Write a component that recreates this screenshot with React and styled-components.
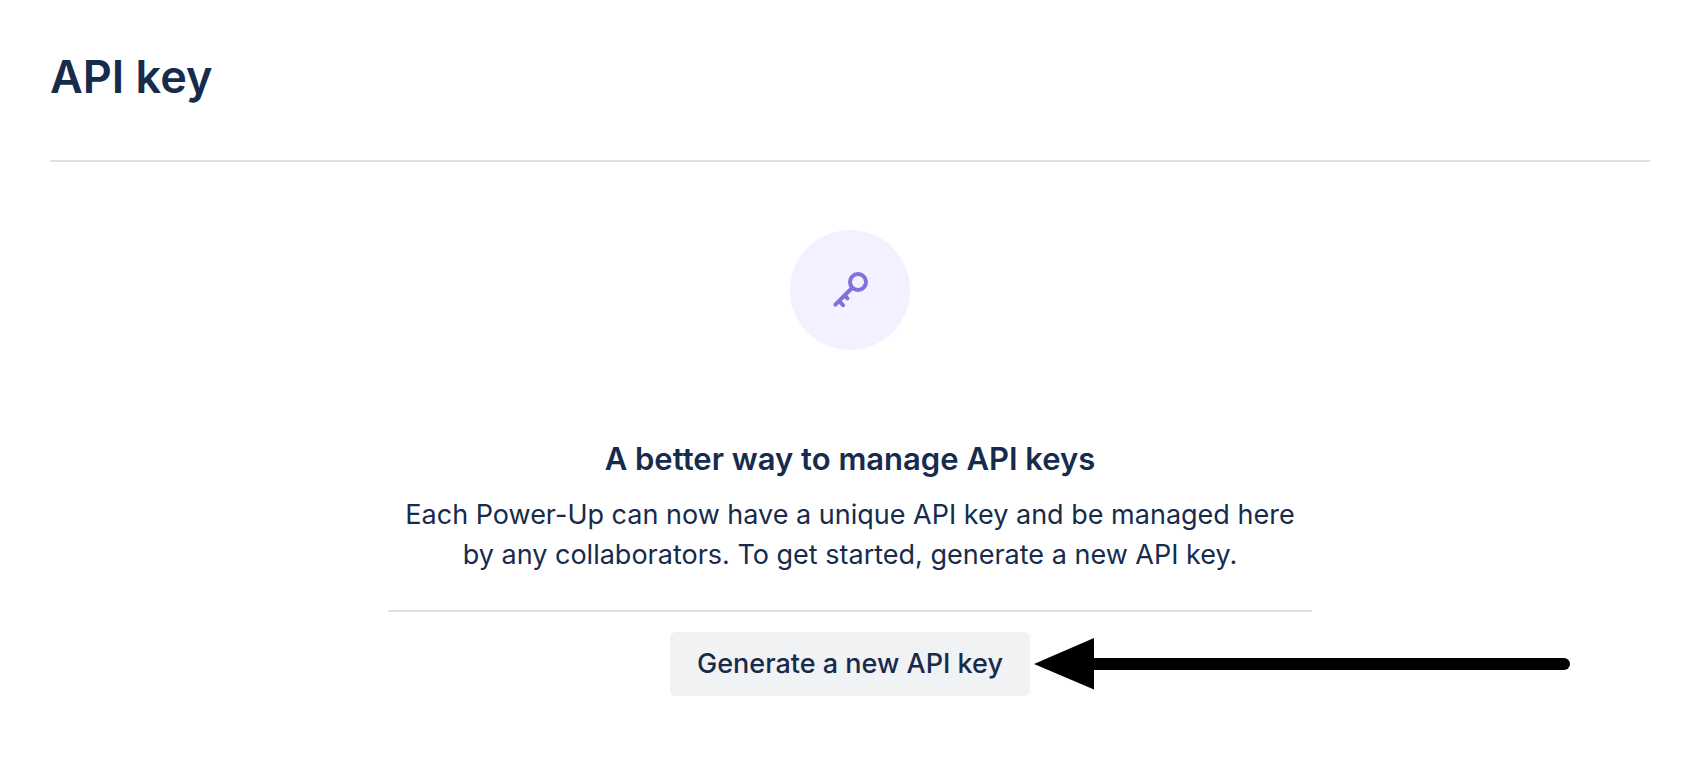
import React from "react";
import styled, { createGlobalStyle } from "styled-components";

const GlobalStyle = createGlobalStyle`
  *, *::before, *::after { box-sizing: border-box; }
  body {
    margin: 0;
    background: #ffffff;
    color: #172b4d;
    font-family: Inter, "Liberation Sans", sans-serif;
    overflow-x: hidden;
  }
`;

const Page = styled.main`
  padding: 48px 46px 64px 50px;
`;

const Header = styled.header`
  padding-bottom: 54px;
  border-bottom: 2px solid #dcdfe4;
`;

const Title = styled.h1`
  margin: 0;
  font-size: 45px;
  line-height: 58px;
  font-weight: 600;
`;

const EmptyState = styled.section`
  display: flex;
  flex-direction: column;
  align-items: center;
  padding-top: 68px;
`;

const IconCircle = styled.div`
  display: flex;
  align-items: center;
  justify-content: center;
  width: 120px;
  height: 120px;
  border-radius: 50%;
  background: #f3f0ff;
`;

const Message = styled.div`
  width: 100%;
  max-width: 924px;
  margin-top: 88px;
  padding-bottom: 35px;
  border-bottom: 2px solid #dcdfe4;
  text-align: center;
`;

const Heading = styled.h2`
  margin: 0 0 15px;
  font-size: 31px;
  line-height: 42px;
  font-weight: 600;
`;

const Text = styled.p`
  margin: 0;
  font-size: 27px;
  line-height: 40px;
`;

const Action = styled.div`
  position: relative;
  margin-top: 20px;
`;

const Button = styled.button`
  display: block;
  min-width: 360px;
  height: 64px;
  padding: 0 24px;
  border: 0;
  border-radius: 6px;
  background: #f1f2f4;
  color: inherit;
  font-family: inherit;
  font-size: 27px;
  line-height: 40px;
  font-weight: 500;
  white-space: nowrap;
  cursor: pointer;
`;

const Pointer = styled.svg`
  position: absolute;
  top: 6px;
  left: 100%;
  margin-left: 4px;
  pointer-events: none;
`;

function KeyIcon() {
  return (
    <svg width="48" height="48" viewBox="0 0 48 48" fill="none" stroke="#8270db" strokeWidth="4" strokeLinecap="round" strokeLinejoin="round" aria-hidden="true">
      <circle cx="32" cy="16" r="8" />
      <path d="M26 22 9.4 38.6M13.5 35.5 17 39.2M18.5 29.5 21.4 32.4" />
    </svg>
  );
}

export default function App() {
  return (
    <>
      <GlobalStyle />
      <Page>
        <Header>
          <Title>API key</Title>
        </Header>
        <EmptyState>
          <IconCircle>
            <KeyIcon />
          </IconCircle>
          <Message>
            <Heading>A better way to manage API keys</Heading>
            <Text>
              Each Power-Up can now have a unique API key and be managed here
              <br />
              by any collaborators. To get started, generate a new API key.
            </Text>
          </Message>
          <Action>
            <Button type="button">Generate a new API key</Button>
            <Pointer width="536" height="52" viewBox="0 0 536 52" aria-hidden="true">
              <path d="M0 26 60 0V51.5Z" fill="#000" />
              <path d="M56 26H530" stroke="#000" strokeWidth="12" strokeLinecap="round" />
            </Pointer>
          </Action>
        </EmptyState>
      </Page>
    </>
  );
}
